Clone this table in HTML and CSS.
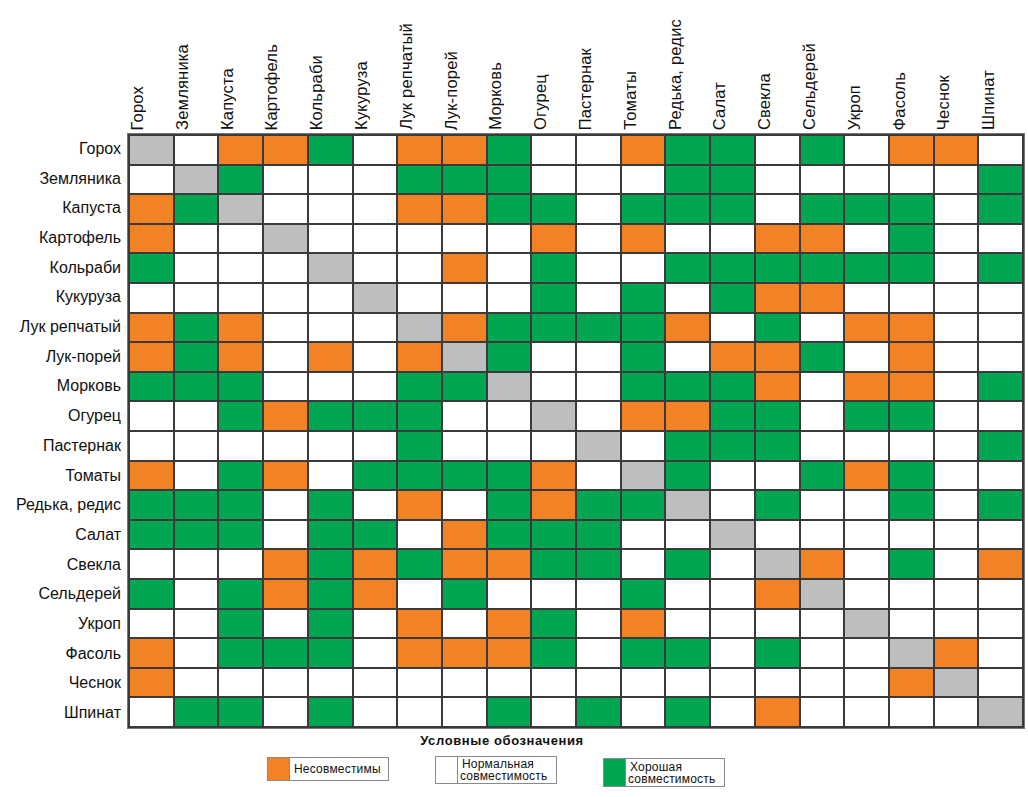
FILE: index.html
```html
<!DOCTYPE html>
<html lang="ru">
<head>
<meta charset="utf-8">
<title>Совместимость овощей</title>
<link rel="stylesheet" href="styles.css">
</head>
<body>
<div class="chart">
  <div class="corner"></div>
  <div class="col-labels">
    <div class="cl"><span>Горох</span></div>
    <div class="cl"><span>Земляника</span></div>
    <div class="cl"><span>Капуста</span></div>
    <div class="cl"><span>Картофель</span></div>
    <div class="cl"><span>Кольраби</span></div>
    <div class="cl"><span>Кукуруза</span></div>
    <div class="cl"><span>Лук репчатый</span></div>
    <div class="cl"><span>Лук-порей</span></div>
    <div class="cl"><span>Морковь</span></div>
    <div class="cl"><span>Огурец</span></div>
    <div class="cl"><span>Пастернак</span></div>
    <div class="cl"><span>Томаты</span></div>
    <div class="cl"><span>Редька, редис</span></div>
    <div class="cl"><span>Салат</span></div>
    <div class="cl"><span>Свекла</span></div>
    <div class="cl"><span>Сельдерей</span></div>
    <div class="cl"><span>Укроп</span></div>
    <div class="cl"><span>Фасоль</span></div>
    <div class="cl"><span>Чеснок</span></div>
    <div class="cl"><span>Шпинат</span></div>
  </div>
  <div class="row-labels">
    <div class="rl">Горох</div>
    <div class="rl">Земляника</div>
    <div class="rl">Капуста</div>
    <div class="rl">Картофель</div>
    <div class="rl">Кольраби</div>
    <div class="rl">Кукуруза</div>
    <div class="rl">Лук репчатый</div>
    <div class="rl">Лук-порей</div>
    <div class="rl">Морковь</div>
    <div class="rl">Огурец</div>
    <div class="rl">Пастернак</div>
    <div class="rl">Томаты</div>
    <div class="rl">Редька, редис</div>
    <div class="rl">Салат</div>
    <div class="rl">Свекла</div>
    <div class="rl">Сельдерей</div>
    <div class="rl">Укроп</div>
    <div class="rl">Фасоль</div>
    <div class="rl">Чеснок</div>
    <div class="rl">Шпинат</div>
  </div>
  <div class="matrix">
    <!-- 1 Горох -->
    <span class="c x"></span><span class="c w"></span><span class="c o"></span><span class="c o"></span><span class="c g"></span><span class="c w"></span><span class="c o"></span><span class="c o"></span><span class="c g"></span><span class="c w"></span><span class="c w"></span><span class="c o"></span><span class="c g"></span><span class="c g"></span><span class="c w"></span><span class="c g"></span><span class="c w"></span><span class="c o"></span><span class="c o"></span><span class="c w"></span>
    <!-- 2 Земляника -->
    <span class="c w"></span><span class="c x"></span><span class="c g"></span><span class="c w"></span><span class="c w"></span><span class="c w"></span><span class="c g"></span><span class="c g"></span><span class="c g"></span><span class="c w"></span><span class="c w"></span><span class="c w"></span><span class="c g"></span><span class="c g"></span><span class="c w"></span><span class="c w"></span><span class="c w"></span><span class="c w"></span><span class="c w"></span><span class="c g"></span>
    <!-- 3 Капуста -->
    <span class="c o"></span><span class="c g"></span><span class="c x"></span><span class="c w"></span><span class="c w"></span><span class="c w"></span><span class="c o"></span><span class="c o"></span><span class="c g"></span><span class="c g"></span><span class="c w"></span><span class="c g"></span><span class="c g"></span><span class="c g"></span><span class="c w"></span><span class="c g"></span><span class="c g"></span><span class="c g"></span><span class="c w"></span><span class="c g"></span>
    <!-- 4 Картофель -->
    <span class="c o"></span><span class="c w"></span><span class="c w"></span><span class="c x"></span><span class="c w"></span><span class="c w"></span><span class="c w"></span><span class="c w"></span><span class="c w"></span><span class="c o"></span><span class="c w"></span><span class="c o"></span><span class="c w"></span><span class="c w"></span><span class="c o"></span><span class="c o"></span><span class="c w"></span><span class="c g"></span><span class="c w"></span><span class="c w"></span>
    <!-- 5 Кольраби -->
    <span class="c g"></span><span class="c w"></span><span class="c w"></span><span class="c w"></span><span class="c x"></span><span class="c w"></span><span class="c w"></span><span class="c o"></span><span class="c w"></span><span class="c g"></span><span class="c w"></span><span class="c w"></span><span class="c g"></span><span class="c g"></span><span class="c g"></span><span class="c g"></span><span class="c g"></span><span class="c g"></span><span class="c w"></span><span class="c g"></span>
    <!-- 6 Кукуруза -->
    <span class="c w"></span><span class="c w"></span><span class="c w"></span><span class="c w"></span><span class="c w"></span><span class="c x"></span><span class="c w"></span><span class="c w"></span><span class="c w"></span><span class="c g"></span><span class="c w"></span><span class="c g"></span><span class="c w"></span><span class="c g"></span><span class="c o"></span><span class="c o"></span><span class="c w"></span><span class="c w"></span><span class="c w"></span><span class="c w"></span>
    <!-- 7 Лук репчатый -->
    <span class="c o"></span><span class="c g"></span><span class="c o"></span><span class="c w"></span><span class="c w"></span><span class="c w"></span><span class="c x"></span><span class="c o"></span><span class="c g"></span><span class="c g"></span><span class="c g"></span><span class="c g"></span><span class="c o"></span><span class="c w"></span><span class="c g"></span><span class="c w"></span><span class="c o"></span><span class="c o"></span><span class="c w"></span><span class="c w"></span>
    <!-- 8 Лук-порей -->
    <span class="c o"></span><span class="c g"></span><span class="c o"></span><span class="c w"></span><span class="c o"></span><span class="c w"></span><span class="c o"></span><span class="c x"></span><span class="c g"></span><span class="c w"></span><span class="c w"></span><span class="c g"></span><span class="c w"></span><span class="c o"></span><span class="c o"></span><span class="c g"></span><span class="c w"></span><span class="c o"></span><span class="c w"></span><span class="c w"></span>
    <!-- 9 Морковь -->
    <span class="c g"></span><span class="c g"></span><span class="c g"></span><span class="c w"></span><span class="c w"></span><span class="c w"></span><span class="c g"></span><span class="c g"></span><span class="c x"></span><span class="c w"></span><span class="c w"></span><span class="c g"></span><span class="c g"></span><span class="c g"></span><span class="c o"></span><span class="c w"></span><span class="c o"></span><span class="c o"></span><span class="c w"></span><span class="c g"></span>
    <!-- 10 Огурец -->
    <span class="c w"></span><span class="c w"></span><span class="c g"></span><span class="c o"></span><span class="c g"></span><span class="c g"></span><span class="c g"></span><span class="c w"></span><span class="c w"></span><span class="c x"></span><span class="c w"></span><span class="c o"></span><span class="c o"></span><span class="c g"></span><span class="c g"></span><span class="c w"></span><span class="c g"></span><span class="c g"></span><span class="c w"></span><span class="c w"></span>
    <!-- 11 Пастернак -->
    <span class="c w"></span><span class="c w"></span><span class="c w"></span><span class="c w"></span><span class="c w"></span><span class="c w"></span><span class="c g"></span><span class="c w"></span><span class="c w"></span><span class="c w"></span><span class="c x"></span><span class="c w"></span><span class="c g"></span><span class="c g"></span><span class="c g"></span><span class="c w"></span><span class="c w"></span><span class="c w"></span><span class="c w"></span><span class="c g"></span>
    <!-- 12 Томаты -->
    <span class="c o"></span><span class="c w"></span><span class="c g"></span><span class="c o"></span><span class="c w"></span><span class="c g"></span><span class="c g"></span><span class="c g"></span><span class="c g"></span><span class="c o"></span><span class="c w"></span><span class="c x"></span><span class="c g"></span><span class="c w"></span><span class="c w"></span><span class="c g"></span><span class="c o"></span><span class="c g"></span><span class="c w"></span><span class="c w"></span>
    <!-- 13 Редька, редис -->
    <span class="c g"></span><span class="c g"></span><span class="c g"></span><span class="c w"></span><span class="c g"></span><span class="c w"></span><span class="c o"></span><span class="c w"></span><span class="c g"></span><span class="c o"></span><span class="c g"></span><span class="c g"></span><span class="c x"></span><span class="c w"></span><span class="c g"></span><span class="c w"></span><span class="c w"></span><span class="c g"></span><span class="c w"></span><span class="c g"></span>
    <!-- 14 Салат -->
    <span class="c g"></span><span class="c g"></span><span class="c g"></span><span class="c w"></span><span class="c g"></span><span class="c g"></span><span class="c w"></span><span class="c o"></span><span class="c g"></span><span class="c g"></span><span class="c g"></span><span class="c w"></span><span class="c w"></span><span class="c x"></span><span class="c w"></span><span class="c w"></span><span class="c w"></span><span class="c w"></span><span class="c w"></span><span class="c w"></span>
    <!-- 15 Свекла -->
    <span class="c w"></span><span class="c w"></span><span class="c w"></span><span class="c o"></span><span class="c g"></span><span class="c o"></span><span class="c g"></span><span class="c o"></span><span class="c o"></span><span class="c g"></span><span class="c g"></span><span class="c w"></span><span class="c g"></span><span class="c w"></span><span class="c x"></span><span class="c o"></span><span class="c w"></span><span class="c g"></span><span class="c w"></span><span class="c o"></span>
    <!-- 16 Сельдерей -->
    <span class="c g"></span><span class="c w"></span><span class="c g"></span><span class="c o"></span><span class="c g"></span><span class="c o"></span><span class="c w"></span><span class="c g"></span><span class="c w"></span><span class="c w"></span><span class="c w"></span><span class="c g"></span><span class="c w"></span><span class="c w"></span><span class="c o"></span><span class="c x"></span><span class="c w"></span><span class="c w"></span><span class="c w"></span><span class="c w"></span>
    <!-- 17 Укроп -->
    <span class="c w"></span><span class="c w"></span><span class="c g"></span><span class="c w"></span><span class="c g"></span><span class="c w"></span><span class="c o"></span><span class="c w"></span><span class="c o"></span><span class="c g"></span><span class="c w"></span><span class="c o"></span><span class="c w"></span><span class="c w"></span><span class="c w"></span><span class="c w"></span><span class="c x"></span><span class="c w"></span><span class="c w"></span><span class="c w"></span>
    <!-- 18 Фасоль -->
    <span class="c o"></span><span class="c w"></span><span class="c g"></span><span class="c g"></span><span class="c g"></span><span class="c w"></span><span class="c o"></span><span class="c o"></span><span class="c o"></span><span class="c g"></span><span class="c w"></span><span class="c g"></span><span class="c g"></span><span class="c w"></span><span class="c g"></span><span class="c w"></span><span class="c w"></span><span class="c x"></span><span class="c o"></span><span class="c w"></span>
    <!-- 19 Чеснок -->
    <span class="c o"></span><span class="c w"></span><span class="c w"></span><span class="c w"></span><span class="c w"></span><span class="c w"></span><span class="c w"></span><span class="c w"></span><span class="c w"></span><span class="c w"></span><span class="c w"></span><span class="c w"></span><span class="c w"></span><span class="c w"></span><span class="c w"></span><span class="c w"></span><span class="c w"></span><span class="c o"></span><span class="c x"></span><span class="c w"></span>
    <!-- 20 Шпинат -->
    <span class="c w"></span><span class="c g"></span><span class="c g"></span><span class="c w"></span><span class="c g"></span><span class="c w"></span><span class="c w"></span><span class="c w"></span><span class="c g"></span><span class="c w"></span><span class="c g"></span><span class="c w"></span><span class="c g"></span><span class="c w"></span><span class="c o"></span><span class="c w"></span><span class="c w"></span><span class="c w"></span><span class="c w"></span><span class="c x"></span>
  </div>
</div>
<div class="legend">
  <div class="legend-title">Условные обозначения</div>
  <div class="legend-items">
    <div class="item item-bad">
      <div class="sw o"></div>
      <div class="lt">Несовместимы</div>
    </div>
    <div class="item item-norm">
      <div class="sw w"></div>
      <div class="lt two"><span class="l1">Нормальная</span><span>совместимость</span></div>
    </div>
    <div class="item item-good">
      <div class="sw g"></div>
      <div class="lt two"><span class="l1">Хорошая</span><span>совместимость</span></div>
    </div>
  </div>
</div>
</body>
</html>
```

FILE: styles.css
```css
* { box-sizing: border-box; }

html, body {
  margin: 0;
  padding: 0;
  background: #ffffff;
}

body {
  width: 1028px;
  height: 797px;
  overflow: hidden;
  font-family: "Liberation Sans", Arial, sans-serif;
  color: #111;
}

.chart {
  display: grid;
  grid-template-columns: 127px 898px;
  grid-template-rows: 133px 596px;
}

.col-labels {
  display: grid;
  grid-template-columns: repeat(20, 1fr);
  column-gap: 2px;
  padding: 0 2px 3px 2px;
}

.cl {
  display: flex;
  flex-direction: column;
  justify-content: flex-end;
  align-items: flex-start;
  overflow: visible;
}

.cl span {
  writing-mode: vertical-rl;
  transform: rotate(180deg);
  font-size: 16.5px;
  line-height: 18px;
  white-space: nowrap;
  margin-left: -1px;
  letter-spacing: 0.2px;
}

.row-labels {
  display: grid;
  grid-template-rows: repeat(20, 1fr);
  row-gap: 2px;
  padding: 2px 6px 2px 0;
}

.rl {
  display: flex;
  align-items: center;
  justify-content: flex-end;
  font-size: 16px;
  white-space: nowrap;
}

.matrix {
  display: grid;
  grid-template-columns: repeat(20, 1fr);
  grid-template-rows: repeat(20, 1fr);
  gap: 2px;
  padding: 2px;
  background: #3a3a3a;
  border: 1px solid #777;
}

.c { display: block; }
.o { background: #f28224; }
.g { background: #00a652; }
.w { background: #ffffff; }
.x { background: #bdbec0; }

.legend {
  width: 1028px;
}

.legend-title {
  margin: 4px 0 0 0;
  width: 1004px;
  text-align: center;
  font-size: 13px;
  line-height: 16px;
  font-weight: bold;
  letter-spacing: 0.6px;
}

.legend-items {
  display: flex;
  align-items: flex-start;
  gap: 46px;
  margin-top: 7px;
  padding-left: 267px;
}

.item {
  display: flex;
  width: 122px;
  border: 1px solid #8a8a8a;
  background: #fff;
}

.item-bad { height: 24px; margin-top: 1px; }
.item-norm { height: 28px; }
.item-good { height: 29px; margin-top: 2px; }

.sw {
  width: 22px;
  flex: none;
  border-right: 1px solid #8a8a8a;
}

.lt {
  display: flex;
  align-items: center;
  padding-left: 4px;
  font-size: 12px;
  line-height: 14px;
  white-space: nowrap;
  letter-spacing: 0.2px;
}

.lt.two {
  flex-direction: column;
  align-items: flex-start;
  justify-content: center;
  padding-left: 2px;
  line-height: 12px;
}

.lt.two .l1 {
  padding-left: 2px;
}
```
